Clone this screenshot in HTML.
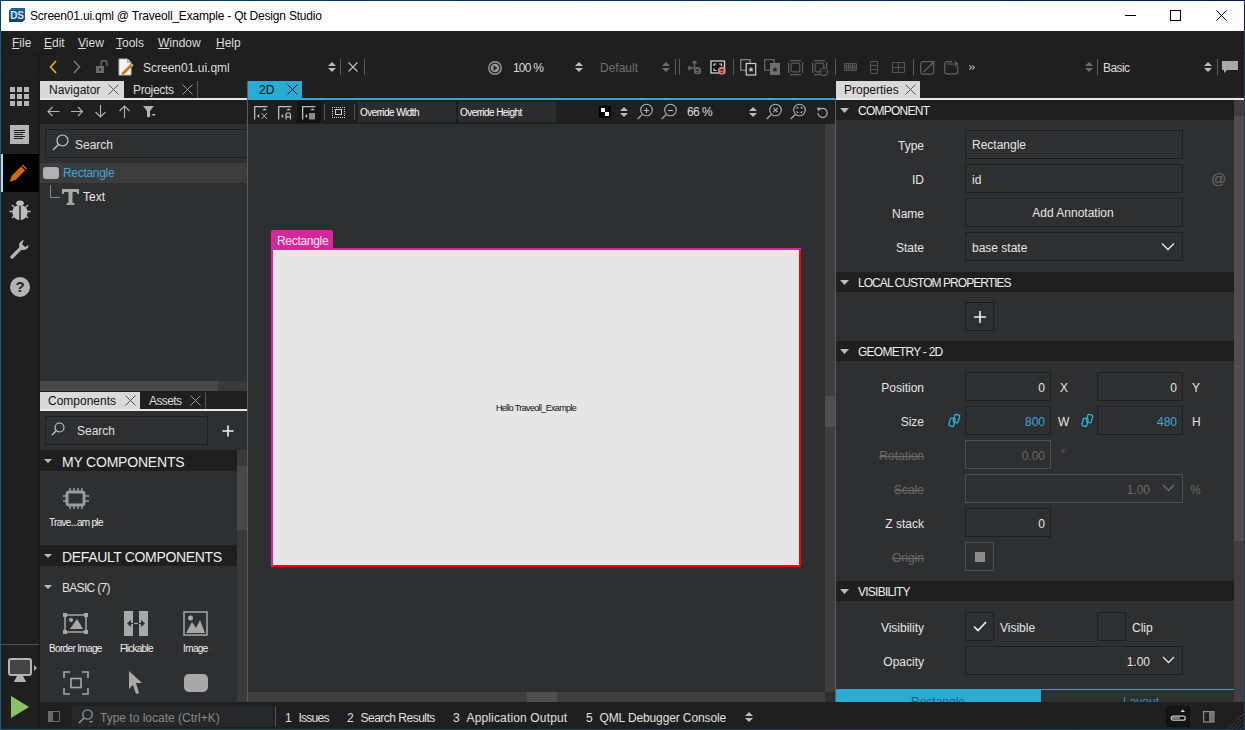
<!DOCTYPE html>
<html><head><meta charset="utf-8">
<style>
*{box-sizing:border-box;margin:0;padding:0}
html,body{width:1245px;height:730px;overflow:hidden;background:#1f1f1f;font-family:"Liberation Sans",sans-serif;font-size:12px;color:#e8e8e8;position:relative}
.a{position:absolute}
.t{position:absolute;white-space:nowrap;line-height:1}
svg{overflow:visible}
</style></head><body>
<div class="a" style="left:0px;top:0px;width:1245px;height:1px;background:linear-gradient(to right,#033f5f,#001c4c);"></div>
<div class="a" style="left:0px;top:729px;width:1245px;height:1px;background:linear-gradient(to right,#185a7a,#183868);"></div>
<div class="a" style="left:0px;top:0px;width:1px;height:31px;background:#033f5f;"></div>
<div class="a" style="left:0px;top:31px;width:1px;height:699px;background:#1a5a7a;"></div>
<div class="a" style="left:1244px;top:0px;width:1px;height:31px;background:#001c4c;"></div>
<div class="a" style="left:1244px;top:31px;width:1px;height:699px;background:#1a3a6c;"></div>
<div class="a" style="left:1px;top:1px;width:1243px;height:30px;background:#ffffff;"></div>
<svg class="a" style="left:9px;top:8px;" width="16" height="14" viewBox="0 0 16 14"><defs><linearGradient id="dsg" x1="0" y1="0" x2="0" y2="1"><stop offset="0" stop-color="#1a6496"/><stop offset="1" stop-color="#0c4670"/></linearGradient></defs><path d="M2.5 0H16V11.5L13.5 14H0V2.5Z" fill="url(#dsg)"/><text x="8" y="11.3" font-size="10" font-weight="bold" fill="#d4e2ea" text-anchor="middle" font-family="Liberation Sans" letter-spacing="-0.3">DS</text></svg>
<div class="t" style="left:30px;top:9.84px;font-size:12px;color:#000000;letter-spacing:-0.2px">Screen01.ui.qml @ Traveoll_Example - Qt Design Studio</div>
<div class="a" style="left:1125px;top:15px;width:11px;height:1px;background:#000;"></div>
<div class="a" style="left:1170px;top:10px;width:11px;height:11px;border:1px solid #000;background:transparent;"></div>
<svg class="a" style="left:1216px;top:10px;" width="11" height="11" viewBox="0 0 11 11"><path d="M0.5 0.5L10.5 10.5M10.5 0.5L0.5 10.5" stroke="#000" stroke-width="1"/></svg>
<div class="a" style="left:1px;top:31px;width:1243px;height:22px;background:#1f1f1f;"></div>
<div class="t" style="left:12px;top:36.84px;font-size:12px;color:#dcdcdc;"><span style="text-decoration:underline;text-underline-offset:1px">F</span>ile</div>
<div class="t" style="left:44px;top:36.84px;font-size:12px;color:#dcdcdc;"><span style="text-decoration:underline;text-underline-offset:1px">E</span>dit</div>
<div class="t" style="left:78px;top:36.84px;font-size:12px;color:#dcdcdc;"><span style="text-decoration:underline;text-underline-offset:1px">V</span>iew</div>
<div class="t" style="left:116px;top:36.84px;font-size:12px;color:#dcdcdc;"><span style="text-decoration:underline;text-underline-offset:1px">T</span>ools</div>
<div class="t" style="left:158px;top:36.84px;font-size:12px;color:#dcdcdc;"><span style="text-decoration:underline;text-underline-offset:1px">W</span>indow</div>
<div class="t" style="left:216px;top:36.84px;font-size:12px;color:#dcdcdc;"><span style="text-decoration:underline;text-underline-offset:1px">H</span>elp</div>
<div class="a" style="left:1px;top:53px;width:1243px;height:1px;background:#1a1a1a;"></div>
<div class="a" style="left:1px;top:54px;width:1243px;height:23px;background:#1f1f1f;"></div>
<svg class="a" style="left:49px;top:60px;" width="9" height="14" viewBox="0 0 9 14"><path d="M7 1L1.5 7L7 13" stroke="#e5b80b" stroke-width="1.6" fill="none"/></svg>
<svg class="a" style="left:73px;top:60px;" width="9" height="14" viewBox="0 0 9 14"><path d="M1 1L6.5 7L1 13" stroke="#777" stroke-width="1.6" fill="none"/></svg>
<svg class="a" style="left:96px;top:60px;" width="13" height="14" viewBox="0 0 13 14"><rect x="0" y="6" width="8" height="7" fill="#6c6c6c"/><rect x="3" y="8.5" width="2" height="2" fill="#1f1f1f"/><path d="M5 6V3.5A3 3 0 0 1 11 3.5V6" stroke="#6c6c6c" stroke-width="1.5" fill="none"/></svg>
<svg class="a" style="left:118px;top:58px;" width="17" height="18" viewBox="0 0 17 18"><path d="M1 1H9.5L13 4.5V17H1Z" fill="#f4f4f4" stroke="#b8b8b8" stroke-width="1"/><path d="M9.5 1V4.5H13" fill="#cfcfcf" stroke="#9a9a9a" stroke-width="0.8"/><path d="M5 15.5L13.5 7" stroke="#d2720c" stroke-width="2.6" stroke-linecap="round"/><path d="M13 5.5L15.5 7L14 9Z" fill="#cfcfcf"/></svg>
<div class="t" style="left:143px;top:61.84px;font-size:12px;color:#dcdcdc;">Screen01.ui.qml</div>
<svg class="a" style="left:328px;top:62px;" width="8" height="10" viewBox="0 0 8 10"><path d="M0 4L4 0L8 4Z M0 6L4 10L8 6Z" fill="#bdbdbd"/></svg>
<div class="a" style="left:340px;top:59px;width:1px;height:16px;background:#5a5a5a;"></div>
<svg class="a" style="left:348px;top:62px;" width="10" height="10" viewBox="0 0 10 10"><path d="M0.5 0.5L9.5 9.5M9.5 0.5L0.5 9.5" stroke="#bdbdbd" stroke-width="1.2"/></svg>
<div class="a" style="left:364px;top:59px;width:1px;height:16px;background:#5a5a5a;"></div>
<svg class="a" style="left:488px;top:61px;" width="14" height="14" viewBox="0 0 14 14"><circle cx="7" cy="7" r="6.2" stroke="#9a9a9a" stroke-width="1.4" fill="none"/><circle cx="7" cy="7" r="4.3" fill="#9a9a9a"/><path d="M5.5 4.3V9.7L9.6 7Z" fill="#1f1f1f"/></svg>
<div class="t" style="left:513px;top:61.84px;font-size:12px;color:#dcdcdc;letter-spacing:-0.8px">100 %</div>
<svg class="a" style="left:575px;top:62px;" width="8" height="10" viewBox="0 0 8 10"><path d="M0 4L4 0L8 4Z M0 6L4 10L8 6Z" fill="#bdbdbd"/></svg>
<div class="t" style="left:600px;top:61.84px;font-size:12px;color:#6e6e6e;">Default</div>
<svg class="a" style="left:662px;top:62px;" width="8" height="10" viewBox="0 0 8 10"><path d="M0 4L4 0L8 4Z M0 6L4 10L8 6Z" fill="#6e6e6e"/></svg>
<div class="a" style="left:675px;top:59px;width:1px;height:16px;background:#5a5a5a;"></div>
<div class="a" style="left:679px;top:59px;width:1px;height:16px;background:#5a5a5a;"></div>
<svg class="a" style="left:686px;top:59px;" width="16" height="16" viewBox="0 0 16 16"><path d="M8.5 9V2M8.5 2L6.5 4.2M8.5 2L10.5 4.2M8.5 9H2M2 9L4.2 7M2 9L4.2 11" stroke="#6a6a6a" stroke-width="1.3" fill="none"/><circle cx="11.5" cy="11.7" r="3.6" fill="#6a6a6a"/><path d="M10 11.5L11.5 10L13 11.5M10.3 13.3H12.7" stroke="#1f1f1f" stroke-width="1"/></svg>
<svg class="a" style="left:710px;top:60px;" width="17" height="15" viewBox="0 0 17 15"><rect x="1" y="1" width="13.5" height="12" stroke="#d4d4d4" stroke-width="1.3" fill="#121212"/><path d="M4 6V4H6.5M9 4H11.5V6M4 8.5V10.5H6.5" stroke="#d4d4d4" stroke-width="1.2" fill="none"/><circle cx="11.8" cy="10.7" r="3.9" fill="#e07a7a"/><path d="M10.3 10.5L11.8 9L13.3 10.5M10.6 12.3H13" stroke="#1f1f1f" stroke-width="1"/></svg>
<div class="a" style="left:733px;top:59px;width:1px;height:16px;background:#5a5a5a;"></div>
<svg class="a" style="left:740px;top:59px;" width="17" height="17" viewBox="0 0 17 17"><rect x="0.7" y="0.7" width="9.5" height="10.5" stroke="#8a8a8a" stroke-width="1.2" fill="none"/><rect x="6.2" y="4.5" width="9.5" height="11.5" stroke="#d0d0d0" stroke-width="1.2" fill="#1f1f1f"/><path d="M11 7.8L11.8 9.8H13.8L12.2 11L12.8 13L11 11.8L9.2 13L9.8 11L8.2 9.8H10.2Z" fill="#d0d0d0"/></svg>
<svg class="a" style="left:764px;top:59px;" width="17" height="17" viewBox="0 0 17 17"><rect x="0.7" y="0.7" width="9.5" height="10.5" stroke="#6a6a6a" stroke-width="1.2" fill="none"/><rect x="6" y="4" width="10" height="12" fill="#6e6e6e"/><path d="M11 7.8L11.8 9.8H13.8L12.2 11L12.8 13L11 11.8L9.2 13L9.8 11L8.2 9.8H10.2Z" fill="#1f1f1f"/></svg>
<svg class="a" style="left:788px;top:60px;" width="16" height="16" viewBox="0 0 16 16"><path d="M2 0.6H13M2 14.6H13M0.6 2V13M14.6 2V13" stroke="#5c5c5c" stroke-width="1.2"/><rect x="3.2" y="3.2" width="8.6" height="8.6" rx="1.5" stroke="#5c5c5c" stroke-width="1.2" fill="none"/></svg>
<svg class="a" style="left:812px;top:60px;" width="16" height="16" viewBox="0 0 16 16"><path d="M2 0.6H13M2 14.6H8M0.6 2V13M14.6 2V8" stroke="#5c5c5c" stroke-width="1.2"/><rect x="3.2" y="3.2" width="8.6" height="8.6" rx="1.5" stroke="#5c5c5c" stroke-width="1.2" fill="none"/><circle cx="11.8" cy="11.8" r="3.8" fill="#1f1f1f" stroke="#5c5c5c" stroke-width="1.2"/><path d="M10.3 11.8L11.8 10.3L13.3 11.8" stroke="#5c5c5c" stroke-width="1"/></svg>
<div class="a" style="left:835px;top:59px;width:1px;height:16px;background:#5a5a5a;"></div>
<svg class="a" style="left:844px;top:63px;" width="13" height="8" viewBox="0 0 13 8"><path d="M0.5 0.5H12.5V7.5H0.5Z M4.5 0.5V7.5M8.5 0.5V7.5" stroke="#555" fill="none"/><rect x="1.5" y="1.5" width="2" height="5" fill="#555"/><rect x="5.5" y="1.5" width="2" height="5" fill="#555"/><rect x="9.5" y="1.5" width="2" height="5" fill="#555"/></svg>
<svg class="a" style="left:870px;top:61px;" width="8" height="13" viewBox="0 0 8 13"><path d="M0.5 0.5H7.5V12.5H0.5Z M0.5 4.5H7.5M0.5 8.5H7.5" stroke="#555" fill="none"/></svg>
<svg class="a" style="left:892px;top:62px;" width="13" height="11" viewBox="0 0 13 11"><path d="M0.5 0.5H12.5V10.5H0.5Z M6.5 0.5V10.5M0.5 5.5H12.5" stroke="#555" fill="none"/></svg>
<div class="a" style="left:913px;top:59px;width:1px;height:16px;background:#5a5a5a;"></div>
<svg class="a" style="left:920px;top:60px;" width="16" height="15" viewBox="0 0 16 15"><rect x="0.7" y="1.7" width="13" height="12.5" rx="2.5" stroke="#626262" stroke-width="1.2" fill="none"/><path d="M3.5 12L15 1" stroke="#626262" stroke-width="1.3"/></svg>
<svg class="a" style="left:944px;top:60px;" width="15" height="15" viewBox="0 0 15 15"><path d="M8 1.7H3A2.3 2.3 0 0 0 0.7 4V11.5A2.3 2.3 0 0 0 3 13.8H11.5A2.3 2.3 0 0 0 13.8 11.5V6" stroke="#626262" stroke-width="1.2" fill="none"/><path d="M3 4H13.5M11 1.5L13.8 4L11 6.5" stroke="#626262" stroke-width="1.2" fill="none"/></svg>
<svg class="a" style="left:968px;top:64px;" width="9" height="7" viewBox="0 0 9 7"><path d="M1.3 1.3L3.5 3.5L1.3 5.7M4.3 1.3L6.5 3.5L4.3 5.7" stroke="#b0b0b0" stroke-width="1.1" fill="none"/></svg>
<svg class="a" style="left:1085px;top:62px;" width="8" height="10" viewBox="0 0 8 10"><path d="M0 4L4 0L8 4Z M0 6L4 10L8 6Z" fill="#6e6e6e"/></svg>
<div class="a" style="left:1097px;top:59px;width:1px;height:16px;background:#5a5a5a;"></div>
<div class="t" style="left:1103px;top:61.84px;font-size:12px;color:#dcdcdc;letter-spacing:-0.6px">Basic</div>
<svg class="a" style="left:1204px;top:62px;" width="8" height="10" viewBox="0 0 8 10"><path d="M0 4L4 0L8 4Z M0 6L4 10L8 6Z" fill="#bdbdbd"/></svg>
<div class="a" style="left:1217px;top:59px;width:1px;height:16px;background:#5a5a5a;"></div>
<svg class="a" style="left:1222px;top:61px;" width="17" height="12" viewBox="0 0 17 12"><path d="M0 0H16V9H5L2 12V9H0Z" fill="#a8a8a8"/></svg>
<div class="a" style="left:1px;top:77px;width:39px;height:652px;background:#1f1f1f;"></div>
<div class="a" style="left:1px;top:77px;width:39px;height:1px;background:#1a1a1a;"></div>
<div class="a" style="left:10px;top:87px;width:5px;height:5px;background:#b4b4b4;"></div>
<div class="a" style="left:10px;top:94px;width:5px;height:5px;background:#b4b4b4;"></div>
<div class="a" style="left:10px;top:101px;width:5px;height:5px;background:#b4b4b4;"></div>
<div class="a" style="left:17px;top:87px;width:5px;height:5px;background:#b4b4b4;"></div>
<div class="a" style="left:17px;top:94px;width:5px;height:5px;background:#b4b4b4;"></div>
<div class="a" style="left:17px;top:101px;width:5px;height:5px;background:#b4b4b4;"></div>
<div class="a" style="left:24px;top:87px;width:5px;height:5px;background:#b4b4b4;"></div>
<div class="a" style="left:24px;top:94px;width:5px;height:5px;background:#b4b4b4;"></div>
<div class="a" style="left:24px;top:101px;width:5px;height:5px;background:#b4b4b4;"></div>
<div class="a" style="left:10px;top:125px;width:19px;height:19px;background:#b4b4b4;"></div>
<div class="a" style="left:14px;top:130px;width:11px;height:1px;background:#1f1f1f;"></div>
<div class="a" style="left:14px;top:132px;width:11px;height:1px;background:#1f1f1f;"></div>
<div class="a" style="left:14px;top:134px;width:9px;height:1px;background:#1f1f1f;"></div>
<div class="a" style="left:14px;top:136px;width:11px;height:1px;background:#1f1f1f;"></div>
<div class="a" style="left:14px;top:138px;width:9px;height:1px;background:#1f1f1f;"></div>
<div class="a" style="left:1px;top:154px;width:38px;height:38px;background:#000000;"></div>
<div class="a" style="left:1px;top:154px;width:2px;height:38px;background:#cfcfcf;"></div>
<svg class="a" style="left:9px;top:163px;" width="20" height="20" viewBox="0 0 20 20"><path d="M1 18.5L3 12.5L14 1.5L18 5.5L7 16.5Z" fill="#cf6c0c"/><path d="M12.5 3L16.5 7" stroke="#000" stroke-width="1.2"/><path d="M1 18.5L3 12.5L7 16.5Z" fill="#cf6c0c"/></svg>
<svg class="a" style="left:9px;top:200px;" width="22" height="22" viewBox="0 0 22 22"><path d="M3 5L5.5 7.5M19 5L16.5 7.5M0.5 11.5H4M21.5 11.5H18M3 18L5.5 15.5M19 18L16.5 15.5" stroke="#bdbdbd" stroke-width="1.4"/><ellipse cx="11" cy="3.2" rx="3.8" ry="2.6" fill="#bdbdbd"/><path d="M10.3 5.3C6 5.5 3.5 8 3.5 12.5C3.5 17 6.5 19.5 10.3 20Z M11.7 5.3C16 5.5 18.5 8 18.5 12.5C18.5 17 15.5 19.5 11.7 20Z" fill="#bdbdbd"/></svg>
<svg class="a" style="left:10px;top:239px;" width="20" height="20" viewBox="0 0 20 20"><path d="M2 18L11 9" stroke="#b4b4b4" stroke-width="3.2" stroke-linecap="round"/><path d="M10.5 10A5.2 5.2 0 0 1 14 1.2L12 5L15 8L18.8 6A5.2 5.2 0 0 1 10.5 10Z" fill="#b4b4b4"/></svg>
<svg class="a" style="left:10px;top:277px;" width="20" height="20" viewBox="0 0 20 20"><circle cx="10" cy="10" r="10" fill="#b4b4b4"/><text x="10" y="15" font-size="15" font-weight="bold" text-anchor="middle" fill="#1f1f1f" font-family="Liberation Sans">?</text></svg>
<div class="a" style="left:1px;top:644px;width:38px;height:1px;background:#555555;"></div>
<svg class="a" style="left:8px;top:658px;" width="30" height="25" viewBox="0 0 30 25"><rect x="1" y="1" width="22" height="16" rx="2" fill="#444" stroke="#b4b4b4" stroke-width="2"/><path d="M9 18L6 24H18L15 18Z" fill="#b4b4b4"/><path d="M26 7L29 10L26 13Z" fill="#b4b4b4"/></svg>
<svg class="a" style="left:11px;top:696px;" width="19" height="22" viewBox="0 0 19 22"><path d="M0 0L18 11L0 22Z" fill="#8cc06a"/></svg>
<div class="a" style="left:39px;top:54px;width:1px;height:675px;background:#1a1a1a;"></div>
<div class="a" style="left:40px;top:77px;width:207px;height:21px;background:#1f1f1f;"></div>
<div class="a" style="left:40px;top:81px;width:84px;height:17px;background:#d9d9d9;"></div>
<div class="t" style="left:49px;top:83.84px;font-size:12px;color:#111;">Navigator</div>
<svg class="a" style="left:108px;top:84px;" width="11" height="11" viewBox="0 0 11 11"><path d="M0.5 0.5L10.5 10.5M10.5 0.5L0.5 10.5" stroke="#555" stroke-width="1"/></svg>
<div class="t" style="left:133px;top:83.84px;font-size:12px;color:#dcdcdc;letter-spacing:-0.35px">Projects</div>
<svg class="a" style="left:182px;top:84px;" width="11" height="11" viewBox="0 0 11 11"><path d="M0.5 0.5L10.5 10.5M10.5 0.5L0.5 10.5" stroke="#9a9a9a" stroke-width="1"/></svg>
<div class="a" style="left:197px;top:81px;width:1px;height:17px;background:#555;"></div>
<div class="a" style="left:40px;top:98px;width:207px;height:2px;background:#e8e8e8;"></div>
<div class="a" style="left:40px;top:100px;width:207px;height:24px;background:#1f1f1f;"></div>
<svg class="a" style="left:47px;top:106px;" width="13" height="11" viewBox="0 0 13 11"><path d="M12.5 5.5H1M5.5 1L1 5.5L5.5 10" stroke="#b4b4b4" stroke-width="1.1" fill="none"/></svg>
<svg class="a" style="left:71px;top:106px;" width="13" height="11" viewBox="0 0 13 11"><path d="M0 5.5H11.5M7 1L11.5 5.5L7 10" stroke="#b4b4b4" stroke-width="1.1" fill="none"/></svg>
<svg class="a" style="left:95px;top:105px;" width="12" height="13" viewBox="0 0 12 13"><path d="M5.5 0V12M0.5 7L5.5 12L10.5 7" stroke="#b4b4b4" stroke-width="1.1" fill="none"/></svg>
<svg class="a" style="left:119px;top:105px;" width="12" height="13" viewBox="0 0 12 13"><path d="M5.5 13V1M0.5 6L5.5 1L10.5 6" stroke="#b4b4b4" stroke-width="1.1" fill="none"/></svg>
<svg class="a" style="left:143px;top:106px;" width="13" height="11" viewBox="0 0 13 11"><path d="M0 0H11L7 5V11H4V5Z" fill="#b4b4b4"/><path d="M8.5 8H13L10.75 10.2Z" fill="#b4b4b4"/></svg>
<div class="a" style="left:40px;top:124px;width:207px;height:257px;background:#2e2f30;"></div>
<div class="a" style="left:45px;top:129px;width:203px;height:29px;border:1px solid #1f1f1f;background:#2e2f30;"></div>
<svg class="a" style="left:52px;top:134px;" width="17" height="17" viewBox="0 0 17 17"><circle cx="10.5" cy="6.5" r="5.5" stroke="#cfcfcf" stroke-width="1.2" fill="none"/><path d="M6.5 10.5L1 16" stroke="#cfcfcf" stroke-width="1.3"/></svg>
<div class="t" style="left:75px;top:138.84px;font-size:12px;color:#e0e0e0;">Search</div>
<div class="a" style="left:40px;top:163px;width:207px;height:20px;background:#3c3c3c;"></div>
<div class="a" style="left:43px;top:167px;width:16px;height:12px;background:#b0b0b0;border-radius:3px"></div>
<div class="t" style="left:63px;top:166.84px;font-size:12px;color:#3ea8d8;letter-spacing:-0.3px">Rectangle</div>
<div class="a" style="left:50px;top:185px;width:1px;height:13px;background:#8a8a8a;"></div>
<div class="a" style="left:50px;top:197px;width:10px;height:1px;background:#8a8a8a;"></div>
<svg class="a" style="left:62px;top:189px;" width="17" height="16" viewBox="0 0 17 16"><path d="M0 0H17V5H15.5L14.5 3H10.5V13.5L12.5 14.5V16H4.5V14.5L6.5 13.5V3H2.5L1.5 5H0Z" fill="#a8a8a8"/></svg>
<div class="t" style="left:83px;top:190.84px;font-size:12px;color:#e8e8e8;">Text</div>
<div class="a" style="left:40px;top:381px;width:207px;height:10px;background:#3a3a3a;"></div>
<div class="a" style="left:40px;top:381px;width:178px;height:10px;background:#484848;"></div>
<div class="a" style="left:40px;top:391px;width:207px;height:18px;background:#1f1f1f;"></div>
<div class="a" style="left:40px;top:392px;width:100px;height:17px;background:#d9d9d9;"></div>
<div class="t" style="left:48px;top:394.84px;font-size:12px;color:#111;">Components</div>
<svg class="a" style="left:125px;top:395px;" width="11" height="11" viewBox="0 0 11 11"><path d="M0.5 0.5L10.5 10.5M10.5 0.5L0.5 10.5" stroke="#555" stroke-width="1"/></svg>
<div class="t" style="left:149px;top:394.84px;font-size:12px;color:#dcdcdc;letter-spacing:-0.6px">Assets</div>
<svg class="a" style="left:190px;top:395px;" width="11" height="11" viewBox="0 0 11 11"><path d="M0.5 0.5L10.5 10.5M10.5 0.5L0.5 10.5" stroke="#9a9a9a" stroke-width="1"/></svg>
<div class="a" style="left:205px;top:392px;width:1px;height:17px;background:#555;"></div>
<div class="a" style="left:40px;top:409px;width:207px;height:2px;background:#e8e8e8;"></div>
<div class="a" style="left:40px;top:411px;width:207px;height:291px;background:#2e2f30;"></div>
<div class="a" style="left:45px;top:416px;width:163px;height:29px;border:1px solid #1f1f1f;background:#2e2f30;"></div>
<svg class="a" style="left:51px;top:422px;" width="14" height="14" viewBox="0 0 14 14"><circle cx="8.5" cy="5.5" r="4.5" stroke="#cfcfcf" stroke-width="1.1" fill="none"/><path d="M5 9L0.8 13.2" stroke="#cfcfcf" stroke-width="1.2"/></svg>
<div class="t" style="left:77px;top:424.84px;font-size:12px;color:#e0e0e0;">Search</div>
<svg class="a" style="left:222px;top:425px;" width="12" height="12" viewBox="0 0 12 12"><path d="M6 0.5V11.5M0.5 6H11.5" stroke="#f0f0f0" stroke-width="1.6"/></svg>
<div class="a" style="left:237px;top:450px;width:10px;height:252px;background:#3a3a3a;"></div>
<div class="a" style="left:237px;top:466px;width:10px;height:64px;background:#484848;"></div>
<div class="a" style="left:40px;top:450px;width:197px;height:21px;background:#1f1f1f;"></div>
<svg class="a" style="left:44px;top:459px;" width="8" height="4" viewBox="0 0 8 4"><path d="M0 0H8L4 4Z" fill="#bdbdbd"/></svg>
<div class="t" style="left:62px;top:455.15px;font-size:14px;color:#eeeeee;letter-spacing:-0.2px">MY COMPONENTS</div>
<svg class="a" style="left:63px;top:488px;" width="26" height="21" viewBox="0 0 26 21"><rect x="4" y="4" width="17" height="13" rx="2" stroke="#9a9a9a" stroke-width="3" fill="none"/><path d="M7 0V4M11 0V4M15 0V4M19 0V4M7 17V21M11 17V21M15 17V21M19 17V21M0 8H4M0 13H4M21 8H26M21 13H26" stroke="#9a9a9a" stroke-width="1.5"/></svg>
<div class="t" style="left:49px;top:517.53px;font-size:10px;color:#f0f0f0;letter-spacing:-0.7px">Trave...am ple</div>
<div class="a" style="left:40px;top:545px;width:197px;height:21px;background:#1f1f1f;"></div>
<svg class="a" style="left:44px;top:554px;" width="8" height="4" viewBox="0 0 8 4"><path d="M0 0H8L4 4Z" fill="#bdbdbd"/></svg>
<div class="t" style="left:62px;top:550.15px;font-size:14px;color:#eeeeee;letter-spacing:-0.35px">DEFAULT COMPONENTS</div>
<svg class="a" style="left:44px;top:585px;" width="8" height="4" viewBox="0 0 8 4"><path d="M0 0H8L4 4Z" fill="#bdbdbd"/></svg>
<div class="t" style="left:62px;top:581.84px;font-size:12px;color:#e0e0e0;letter-spacing:-0.7px">BASIC (7)</div>
<svg class="a" style="left:63px;top:613px;" width="26" height="22" viewBox="0 0 26 22"><rect x="2" y="2" width="21" height="17" stroke="#a8a8a8" stroke-width="1.5" fill="none"/><rect x="0" y="0" width="4" height="4" fill="#a8a8a8"/><rect x="21" y="0" width="4" height="4" fill="#a8a8a8"/><rect x="0" y="17" width="4" height="4" fill="#a8a8a8"/><rect x="21" y="17" width="4" height="4" fill="#a8a8a8"/><path d="M7 16L14 6L20 16Z" fill="#a8a8a8"/><circle cx="8" cy="7" r="2" fill="#a8a8a8"/></svg>
<div class="t" style="left:49px;top:643.53px;font-size:10px;color:#f0f0f0;letter-spacing:-0.65px">Border Image</div>
<svg class="a" style="left:124px;top:611px;" width="25" height="26" viewBox="0 0 25 26"><rect x="0" y="0" width="9" height="25" fill="#a8a8a8"/><rect x="15" y="0" width="9" height="25" fill="#a8a8a8"/><path d="M3 12.5L7 9V16Z" fill="#2e2f30"/><path d="M21 12.5L17 9V16Z" fill="#2e2f30"/><path d="M6 12.5H9M15 12.5H18" stroke="#2e2f30" stroke-width="1.2"/><path d="M10 12.5H14" stroke="#a8a8a8" stroke-width="1.2"/></svg>
<div class="t" style="left:120px;top:643.53px;font-size:10px;color:#f0f0f0;letter-spacing:-0.75px">Flickable</div>
<svg class="a" style="left:183px;top:611px;" width="26" height="25" viewBox="0 0 26 25"><rect x="1" y="1" width="23" height="23" stroke="#a8a8a8" stroke-width="1.5" fill="none"/><path d="M3 22L9 11L13 17L17 9L22 22Z" fill="#a8a8a8"/><circle cx="7.5" cy="7" r="2.5" fill="#a8a8a8"/></svg>
<div class="t" style="left:183px;top:643.53px;font-size:10px;color:#f0f0f0;letter-spacing:-0.6px">Image</div>
<svg class="a" style="left:63px;top:671px;" width="26" height="24" viewBox="0 0 26 24"><path d="M1 7V1H7M19 1H25V7M25 17V23H19M7 23H1V17" stroke="#a8a8a8" stroke-width="1.6" fill="none"/><rect x="8" y="7.5" width="10" height="9" stroke="#a8a8a8" stroke-width="1.6" fill="none"/></svg>
<svg class="a" style="left:129px;top:671px;" width="14" height="24" viewBox="0 0 14 24"><path d="M0 0L13 12H7L10 22L7 23L4 14L0 18Z" fill="#a8a8a8"/></svg>
<div class="a" style="left:184px;top:674px;width:24px;height:18px;background:#a8a8a8;border-radius:5px"></div>
<div class="a" style="left:247px;top:77px;width:1px;height:4px;background:#1f1f1f;"></div>
<div class="a" style="left:247px;top:81px;width:1px;height:621px;background:#5a5a5a;"></div>
<div class="a" style="left:248px;top:77px;width:587px;height:21px;background:#1f1f1f;"></div>
<div class="a" style="left:248px;top:81px;width:54px;height:17px;background:#2aabd3;"></div>
<div class="t" style="left:259px;top:83.84px;font-size:12px;color:#0b0b0b;">2D</div>
<svg class="a" style="left:287px;top:84px;" width="11" height="11" viewBox="0 0 11 11"><path d="M0.5 0.5L10.5 10.5M10.5 0.5L0.5 10.5" stroke="#101010" stroke-width="1"/></svg>
<div class="a" style="left:248px;top:98px;width:587px;height:2px;background:#2aabd3;"></div>
<div class="a" style="left:248px;top:100px;width:587px;height:24px;background:#1f1f1f;"></div>
<svg class="a" style="left:254px;top:106px;" width="14" height="14" viewBox="0 0 14 14"><path d="M0.65 13.5V0.65H13.5" stroke="#bdbdbd" stroke-width="1.3" fill="none"/><path d="M3 10L5.2 7.8V12.2Z" fill="#bdbdbd"/><path d="M8.2 4.2L10.6 2.2L13 4.2Z" fill="#bdbdbd"/><path d="M7.5 7L13 13M13 7L7.5 13" stroke="#bdbdbd" stroke-width="0.9"/></svg>
<svg class="a" style="left:278px;top:106px;" width="14" height="14" viewBox="0 0 14 14"><path d="M0.65 13.5V0.65H13.5" stroke="#bdbdbd" stroke-width="1.3" fill="none"/><path d="M3 10L5.2 7.8V12.2Z" fill="#bdbdbd"/><path d="M8.2 4.2L10.6 2.2L13 4.2Z" fill="#bdbdbd"/><path d="M8 13.5V8.5L9 7H11.5L12.5 8.5V13.5M8 10.8H12.5" stroke="#bdbdbd" stroke-width="1.2" fill="none"/></svg>
<div class="a" style="left:297px;top:101px;width:24px;height:22px;background:#141414;"></div>
<svg class="a" style="left:302px;top:106px;" width="14" height="14" viewBox="0 0 14 14"><path d="M0.65 13.5V0.65H13.5" stroke="#bdbdbd" stroke-width="1.3" fill="none"/><path d="M3 10L5.2 7.8V12.2Z" fill="#bdbdbd"/><path d="M8.2 4.2L10.6 2.2L13 4.2Z" fill="#bdbdbd"/><rect x="7" y="7" width="6" height="6.5" fill="#8a8a8a"/></svg>
<div class="a" style="left:324px;top:104px;width:1px;height:16px;background:#555;"></div>
<svg class="a" style="left:332px;top:107px;" width="14" height="12" viewBox="0 0 14 12"><rect x="0" y="0" width="1" height="1" fill="#cfcfcf"/><rect x="0" y="10" width="1" height="1" fill="#cfcfcf"/><rect x="2" y="0" width="1" height="1" fill="#cfcfcf"/><rect x="2" y="10" width="1" height="1" fill="#cfcfcf"/><rect x="4" y="0" width="1" height="1" fill="#cfcfcf"/><rect x="4" y="10" width="1" height="1" fill="#cfcfcf"/><rect x="6" y="0" width="1" height="1" fill="#cfcfcf"/><rect x="6" y="10" width="1" height="1" fill="#cfcfcf"/><rect x="8" y="0" width="1" height="1" fill="#cfcfcf"/><rect x="8" y="10" width="1" height="1" fill="#cfcfcf"/><rect x="10" y="0" width="1" height="1" fill="#cfcfcf"/><rect x="10" y="10" width="1" height="1" fill="#cfcfcf"/><rect x="12" y="0" width="1" height="1" fill="#cfcfcf"/><rect x="12" y="10" width="1" height="1" fill="#cfcfcf"/><rect x="0" y="2" width="1" height="1" fill="#cfcfcf"/><rect x="12" y="2" width="1" height="1" fill="#cfcfcf"/><rect x="0" y="4" width="1" height="1" fill="#cfcfcf"/><rect x="12" y="4" width="1" height="1" fill="#cfcfcf"/><rect x="0" y="6" width="1" height="1" fill="#cfcfcf"/><rect x="12" y="6" width="1" height="1" fill="#cfcfcf"/><rect x="0" y="8" width="1" height="1" fill="#cfcfcf"/><rect x="12" y="8" width="1" height="1" fill="#cfcfcf"/><rect x="3.5" y="2.5" width="6" height="5" stroke="#cfcfcf" fill="none"/></svg>
<div class="a" style="left:354px;top:104px;width:1px;height:16px;background:#555;"></div>
<div class="a" style="left:358px;top:102px;width:98px;height:20px;background:#2b2c2d;"></div>
<div class="t" style="left:360px;top:107.53px;font-size:10px;color:#ffffff;letter-spacing:-0.55px">Override Width</div>
<div class="a" style="left:458px;top:102px;width:98px;height:20px;background:#2b2c2d;"></div>
<div class="t" style="left:460px;top:107.53px;font-size:10px;color:#ffffff;letter-spacing:-0.55px">Override Height</div>
<svg class="a" style="left:599px;top:106px;" width="12" height="12" viewBox="0 0 12 12"><rect x="0" y="0" width="12" height="12" fill="#000"/><rect x="2" y="2" width="4" height="4" fill="#fff"/><rect x="6" y="6" width="4" height="4" fill="#fff"/></svg>
<svg class="a" style="left:620px;top:107px;" width="8" height="10" viewBox="0 0 8 10"><path d="M0 4L4 0L8 4Z M0 6L4 10L8 6Z" fill="#bdbdbd"/></svg>
<svg class="a" style="left:637px;top:104px;" width="17" height="17" viewBox="0 0 17 17"><circle cx="9.5" cy="6" r="5.8" stroke="#b0b0b0" stroke-width="1.1" fill="none"/><path d="M5.4 10.3L0.7 15" stroke="#b0b0b0" stroke-width="1.2"/><path d="M6.8 6.5H12.2M9.5 3.8V9.2" stroke="#b0b0b0" stroke-width="1.1"/></svg>
<svg class="a" style="left:661px;top:104px;" width="17" height="17" viewBox="0 0 17 17"><circle cx="9.5" cy="6" r="5.8" stroke="#b0b0b0" stroke-width="1.1" fill="none"/><path d="M5.4 10.3L0.7 15" stroke="#b0b0b0" stroke-width="1.2"/><path d="M6.8 6.5H12.2" stroke="#b0b0b0" stroke-width="1.1"/></svg>
<div class="t" style="left:687px;top:105.84px;font-size:12px;color:#dcdcdc;letter-spacing:-0.6px">66 %</div>
<svg class="a" style="left:749px;top:107px;" width="8" height="10" viewBox="0 0 8 10"><path d="M0 4L4 0L8 4Z M0 6L4 10L8 6Z" fill="#bdbdbd"/></svg>
<svg class="a" style="left:766px;top:104px;" width="17" height="17" viewBox="0 0 17 17"><circle cx="9.5" cy="6" r="5.8" stroke="#b0b0b0" stroke-width="1.1" fill="none"/><path d="M5.4 10.3L0.7 15" stroke="#b0b0b0" stroke-width="1.2"/><path d="M7.3 3.8L11.7 8.2M11.7 3.8L7.3 8.2" stroke="#b0b0b0" stroke-width="1.1"/></svg>
<svg class="a" style="left:790px;top:104px;" width="17" height="17" viewBox="0 0 17 17"><circle cx="9.5" cy="6" r="5.8" stroke="#b0b0b0" stroke-width="1.1" fill="none"/><path d="M5.4 10.3L0.7 15" stroke="#b0b0b0" stroke-width="1.2"/><path d="M7 5V3.5H8.5M10.5 3.5H12V5M12 7V8.5H10.5M8.5 8.5H7V7" stroke="#b0b0b0" stroke-width="1"/></svg>
<svg class="a" style="left:817px;top:107px;" width="11" height="11" viewBox="0 0 11 11"><path d="M2.5 2.5A4.6 4.6 0 1 1 1 6" stroke="#aaa" stroke-width="1.2" fill="none"/><path d="M0 0.5L4.5 1L1 4.5Z" fill="#aaa"/></svg>
<div class="a" style="left:248px;top:124px;width:587px;height:578px;background:#2e2f30;"></div>
<div class="a" style="left:825px;top:124px;width:10px;height:568px;background:#3f3f3f;"></div>
<div class="a" style="left:825px;top:396px;width:10px;height:31px;background:#4f4f4f;"></div>
<div class="a" style="left:248px;top:692px;width:577px;height:10px;background:#3f3f3f;"></div>
<div class="a" style="left:527px;top:692px;width:30px;height:10px;background:#4f4f4f;"></div>
<div class="a" style="left:825px;top:692px;width:10px;height:10px;background:#2e2f30;"></div>
<div class="a" style="left:271px;top:230px;width:62px;height:18px;background:#d7289b;border-radius:2px 2px 0 0"></div>
<div class="t" style="left:277px;top:234.84px;font-size:12px;color:#eaeaea;letter-spacing:-0.3px">Rectangle</div>
<div class="a" style="left:271px;top:248px;width:530px;height:319px;background:#d7289b;"></div>
<div class="a" style="left:273px;top:250px;width:528px;height:317px;background:#ff0000;"></div>
<div class="a" style="left:273px;top:250px;width:526px;height:315px;background:#e6e6e6;"></div>
<div class="a" style="left:273px;top:248px;width:528px;height:2px;background:#d7289b;"></div>
<div class="t" style="left:236px;width:600px;text-align:center;top:404.38px;font-size:9px;color:#111;letter-spacing:-0.65px">Hello Traveoll_Example</div>
<div class="a" style="left:835px;top:77px;width:1px;height:21px;background:#1f1f1f;"></div>
<div class="a" style="left:835px;top:98px;width:1px;height:604px;background:#5a5a5a;"></div>
<div class="a" style="left:836px;top:77px;width:408px;height:21px;background:#1f1f1f;"></div>
<div class="a" style="left:836px;top:81px;width:84px;height:17px;background:#d9d9d9;"></div>
<div class="t" style="left:844px;top:83.84px;font-size:12px;color:#111;">Properties</div>
<svg class="a" style="left:905px;top:84px;" width="11" height="11" viewBox="0 0 11 11"><path d="M0.5 0.5L10.5 10.5M10.5 0.5L0.5 10.5" stroke="#555" stroke-width="1"/></svg>
<div class="a" style="left:836px;top:98px;width:408px;height:2px;background:#e8e8e8;"></div>
<div class="a" style="left:836px;top:100px;width:398px;height:589px;background:#2e2f30;"></div>
<div class="a" style="left:1234px;top:100px;width:10px;height:602px;background:#3f3f3f;"></div>
<div class="a" style="left:1234px;top:116px;width:10px;height:425px;background:#4f4f4f;"></div>
<div class="a" style="left:836px;top:100px;width:398px;height:20px;background:#1f1f1f;"></div>
<svg class="a" style="left:840px;top:108px;" width="9" height="5" viewBox="0 0 9 5"><path d="M0 0H9L4.5 5Z" fill="#bdbdbd"/></svg>
<div class="t" style="left:858px;top:104.84px;font-size:12px;color:#eeeeee;letter-spacing:-0.75px">COMPONENT</div>
<div class="t" style="right:321px;top:139.84px;font-size:12px;color:#e6e6e6;">Type</div>
<div class="a" style="left:965px;top:130px;width:218px;height:29px;border:1px solid #1f1f1f;background:#2e2f30;"></div>
<div class="t" style="left:972px;top:138.84px;font-size:12px;color:#e6e6e6;">Rectangle</div>
<div class="t" style="right:321px;top:173.84px;font-size:12px;color:#e6e6e6;">ID</div>
<div class="a" style="left:965px;top:164px;width:218px;height:29px;border:1px solid #1f1f1f;background:#2e2f30;"></div>
<div class="t" style="left:972px;top:173.84px;font-size:12px;color:#e6e6e6;">id</div>
<svg class="a" style="left:1211px;top:172px;" width="15" height="14" viewBox="0 0 15 14"><text x="7.5" y="12" font-size="15" text-anchor="middle" fill="#6a6a6a" font-family="Liberation Sans">@</text></svg>
<div class="t" style="right:321px;top:207.84px;font-size:12px;color:#e6e6e6;">Name</div>
<div class="a" style="left:965px;top:198px;width:218px;height:29px;border:1px solid #1f1f1f;background:#2e2f30;"></div>
<div class="t" style="left:773px;width:600px;text-align:center;top:206.84px;font-size:12px;color:#e6e6e6;">Add Annotation</div>
<div class="t" style="right:321px;top:241.84px;font-size:12px;color:#e6e6e6;">State</div>
<div class="a" style="left:965px;top:232px;width:218px;height:29px;border:1px solid #1f1f1f;background:#2e2f30;"></div>
<div class="t" style="left:972px;top:241.84px;font-size:12px;color:#e6e6e6;">base state</div>
<svg class="a" style="left:1161px;top:242px;" width="14" height="9" viewBox="0 0 14 9"><path d="M1 1.5L7 7.5L13 1.5" stroke="#e6e6e6" stroke-width="1.4" fill="none"/></svg>
<div class="a" style="left:836px;top:272px;width:398px;height:20px;background:#1f1f1f;"></div>
<svg class="a" style="left:840px;top:280px;" width="9" height="5" viewBox="0 0 9 5"><path d="M0 0H9L4.5 5Z" fill="#bdbdbd"/></svg>
<div class="t" style="left:858px;top:276.84px;font-size:12px;color:#eeeeee;letter-spacing:-0.95px">LOCAL CUSTOM PROPERTIES</div>
<div class="a" style="left:965px;top:302px;width:29px;height:29px;border:1px solid #1f1f1f;background:#2e2f30;"></div>
<svg class="a" style="left:974px;top:311px;" width="12" height="12" viewBox="0 0 12 12"><path d="M6 0V12M0 6H12" stroke="#f0f0f0" stroke-width="1.6"/></svg>
<div class="a" style="left:836px;top:341px;width:398px;height:20px;background:#1f1f1f;"></div>
<svg class="a" style="left:840px;top:349px;" width="9" height="5" viewBox="0 0 9 5"><path d="M0 0H9L4.5 5Z" fill="#bdbdbd"/></svg>
<div class="t" style="left:858px;top:345.84px;font-size:12px;color:#eeeeee;letter-spacing:-0.75px">GEOMETRY - 2D</div>
<div class="t" style="right:321px;top:381.84px;font-size:12px;color:#e6e6e6;">Position</div>
<div class="a" style="left:965px;top:372px;width:86px;height:29px;border:1px solid #1f1f1f;background:#2e2f30;"></div>
<div class="t" style="right:200px;top:381.84px;font-size:12px;color:#e6e6e6;">0</div>
<div class="t" style="left:1060px;top:381.84px;font-size:12px;color:#e6e6e6;">X</div>
<div class="a" style="left:1097px;top:372px;width:86px;height:29px;border:1px solid #1f1f1f;background:#2e2f30;"></div>
<div class="t" style="right:68px;top:381.84px;font-size:12px;color:#e6e6e6;">0</div>
<div class="t" style="left:1192px;top:381.84px;font-size:12px;color:#e6e6e6;">Y</div>
<div class="t" style="right:321px;top:415.84px;font-size:12px;color:#e6e6e6;">Size</div>
<svg class="a" style="left:948px;top:414px;" width="13" height="13" viewBox="0 0 13 13"><rect x="-2.5" y="-4" width="5" height="8" rx="1.3" transform="translate(4,8.3) rotate(15)" stroke="#2ab4de" stroke-width="1.3" fill="none"/><rect x="-2.5" y="-4" width="5" height="8" rx="1.3" transform="translate(8.5,4.6) rotate(15)" stroke="#2ab4de" stroke-width="1.3" fill="none"/></svg>
<svg class="a" style="left:1081px;top:414px;" width="13" height="13" viewBox="0 0 13 13"><rect x="-2.5" y="-4" width="5" height="8" rx="1.3" transform="translate(4,8.3) rotate(15)" stroke="#2ab4de" stroke-width="1.3" fill="none"/><rect x="-2.5" y="-4" width="5" height="8" rx="1.3" transform="translate(8.5,4.6) rotate(15)" stroke="#2ab4de" stroke-width="1.3" fill="none"/></svg>
<div class="a" style="left:965px;top:406px;width:86px;height:29px;border:1px solid #1f1f1f;background:#2e2f30;"></div>
<div class="t" style="right:200px;top:415.84px;font-size:12px;color:#3ea8d8;">800</div>
<div class="t" style="left:1058px;top:415.84px;font-size:12px;color:#e6e6e6;">W</div>
<div class="a" style="left:1097px;top:406px;width:86px;height:29px;border:1px solid #1f1f1f;background:#2e2f30;"></div>
<div class="t" style="right:68px;top:415.84px;font-size:12px;color:#3ea8d8;">480</div>
<div class="t" style="left:1192px;top:415.84px;font-size:12px;color:#e6e6e6;">H</div>
<div class="t" style="right:321px;top:449.84px;font-size:12px;color:#6a6a6a;text-decoration:line-through">Rotation</div>
<div class="a" style="left:965px;top:440px;width:86px;height:29px;border:1px solid #4e4e4e;background:#2e2f30;"></div>
<div class="t" style="right:200px;top:449.84px;font-size:12px;color:#6a6a6a;">0.00</div>
<div class="t" style="left:1061px;top:448.54px;font-size:10px;color:#6a6a6a;">°</div>
<div class="t" style="right:321px;top:483.84px;font-size:12px;color:#6a6a6a;text-decoration:line-through">Scale</div>
<div class="a" style="left:965px;top:474px;width:218px;height:29px;border:1px solid #4e4e4e;background:#2e2f30;"></div>
<div class="t" style="right:95px;top:483.84px;font-size:12px;color:#6a6a6a;">1.00</div>
<svg class="a" style="left:1162px;top:484px;" width="13" height="8" viewBox="0 0 13 8"><path d="M1 1L6.5 6.5L12 1" stroke="#6a6a6a" stroke-width="1.3" fill="none"/></svg>
<div class="t" style="left:1190px;top:483.84px;font-size:12px;color:#6a6a6a;">%</div>
<div class="t" style="right:321px;top:517.84px;font-size:12px;color:#e6e6e6;">Z stack</div>
<div class="a" style="left:965px;top:508px;width:86px;height:29px;border:1px solid #1f1f1f;background:#2e2f30;"></div>
<div class="t" style="right:200px;top:517.84px;font-size:12px;color:#e6e6e6;">0</div>
<div class="t" style="right:321px;top:551.84px;font-size:12px;color:#6a6a6a;text-decoration:line-through">Origin</div>
<div class="a" style="left:965px;top:542px;width:29px;height:29px;border:1px solid #4e4e4e;background:#2e2f30;"></div>
<div class="a" style="left:975px;top:552px;width:10px;height:10px;background:#8a8a8a;"></div>
<div class="a" style="left:836px;top:581px;width:398px;height:20px;background:#1f1f1f;"></div>
<svg class="a" style="left:840px;top:589px;" width="9" height="5" viewBox="0 0 9 5"><path d="M0 0H9L4.5 5Z" fill="#bdbdbd"/></svg>
<div class="t" style="left:858px;top:585.84px;font-size:12px;color:#eeeeee;letter-spacing:-0.75px">VISIBILITY</div>
<div class="t" style="right:321px;top:621.84px;font-size:12px;color:#e6e6e6;">Visibility</div>
<div class="a" style="left:965px;top:612px;width:29px;height:29px;border:1px solid #1f1f1f;background:#2e2f30;"></div>
<svg class="a" style="left:973px;top:621px;" width="14" height="11" viewBox="0 0 14 11"><path d="M1 5.5L5 9.5L13 1" stroke="#f0f0f0" stroke-width="1.7" fill="none"/></svg>
<div class="t" style="left:1000px;top:621.84px;font-size:12px;color:#e6e6e6;">Visible</div>
<div class="a" style="left:1097px;top:612px;width:29px;height:29px;border:1px solid #1f1f1f;background:#2e2f30;"></div>
<div class="t" style="left:1132px;top:621.84px;font-size:12px;color:#e6e6e6;">Clip</div>
<div class="t" style="right:321px;top:655.84px;font-size:12px;color:#e6e6e6;">Opacity</div>
<div class="a" style="left:965px;top:646px;width:218px;height:29px;border:1px solid #1f1f1f;background:#2e2f30;"></div>
<div class="t" style="right:95px;top:655.84px;font-size:12px;color:#e6e6e6;">1.00</div>
<svg class="a" style="left:1162px;top:656px;" width="13" height="8" viewBox="0 0 13 8"><path d="M1 1L6.5 6.5L12 1" stroke="#e6e6e6" stroke-width="1.3" fill="none"/></svg>
<div class="a" style="left:836px;top:689px;width:205px;height:13px;background:#2aabd3;"></div>
<div class="t" style="left:638px;width:600px;text-align:center;top:695.84px;font-size:12px;color:#1a5f80;">Rectangle</div>
<div class="a" style="left:1041px;top:689px;width:193px;height:1px;background:#2aabd3;"></div>
<div class="a" style="left:1041px;top:690px;width:193px;height:12px;background:#2e2f30;"></div>
<div class="t" style="left:841px;width:600px;text-align:center;top:695.84px;font-size:12px;color:#2a90c0;">Layout</div>
<div class="a" style="left:40px;top:702px;width:1204px;height:27px;background:#1f1f1f;"></div>
<svg class="a" style="left:48px;top:711px;" width="12" height="11" viewBox="0 0 12 11"><rect x="0.5" y="0.5" width="11" height="10" stroke="#6a6a6a" fill="none"/><rect x="1" y="1" width="4" height="9" fill="#6a6a6a"/></svg>
<div class="a" style="left:72px;top:706px;width:201px;height:21px;background:#262728;"></div>
<svg class="a" style="left:78px;top:709px;" width="16" height="15" viewBox="0 0 16 15"><circle cx="9.5" cy="5.5" r="4.7" stroke="#9a9a9a" stroke-width="1.2" fill="none"/><path d="M6 9L1 14" stroke="#9a9a9a" stroke-width="1.5"/><path d="M11 12H15L13 14Z" fill="#9a9a9a"/></svg>
<div class="t" style="left:100px;top:711.84px;font-size:12px;color:#888888;">Type to locate (Ctrl+K)</div>
<div class="a" style="left:275px;top:706px;width:1px;height:21px;background:#555;"></div>
<div class="t" style="left:285px;top:711.84px;font-size:12px;color:#e0e0e0;">1</div>
<div class="t" style="left:298.5px;top:711.84px;font-size:12px;color:#e0e0e0;letter-spacing:-0.75px">Issues</div>
<div class="t" style="left:347px;top:711.84px;font-size:12px;color:#e0e0e0;">2</div>
<div class="t" style="left:360.5px;top:711.84px;font-size:12px;color:#e0e0e0;letter-spacing:-0.5px">Search Results</div>
<div class="t" style="left:453px;top:711.84px;font-size:12px;color:#e0e0e0;">3</div>
<div class="t" style="left:466.5px;top:711.84px;font-size:12px;color:#e0e0e0;letter-spacing:0.15px">Application Output</div>
<div class="t" style="left:586px;top:711.84px;font-size:12px;color:#e0e0e0;">5</div>
<div class="t" style="left:599.5px;top:711.84px;font-size:12px;color:#e0e0e0;letter-spacing:-0.12px">QML Debugger Console</div>
<svg class="a" style="left:745px;top:712px;" width="8" height="10" viewBox="0 0 8 10"><path d="M0 4L4 0L8 4Z M0 6L4 10L8 6Z" fill="#bdbdbd"/></svg>
<div class="a" style="left:1166px;top:706px;width:24px;height:21px;background:#131313;"></div>
<svg class="a" style="left:1170px;top:708px;" width="17" height="14" viewBox="0 0 17 14"><path d="M10.5 4H15L12.75 1.5Z" fill="#d0d0d0"/><rect x="1.2" y="8.2" width="14" height="4" rx="2" stroke="#d0d0d0" stroke-width="1.2" fill="#000"/><rect x="2" y="9" width="8" height="2.4" fill="#777"/></svg>
<svg class="a" style="left:1203px;top:711px;" width="12" height="12" viewBox="0 0 12 12"><rect x="0.6" y="0.6" width="10.4" height="10.4" stroke="#8a8a8a" stroke-width="1.2" fill="none"/><rect x="6" y="1" width="5" height="10" fill="#777"/></svg>
<svg class="a" style="left:1228px;top:713px;" width="16" height="16" viewBox="0 0 16 16"><path d="M16 0L0 16M16 4L4 16M16 8L8 16M16 12L12 16" stroke="#3a3a3a" stroke-width="0.8"/></svg>
</body></html>
